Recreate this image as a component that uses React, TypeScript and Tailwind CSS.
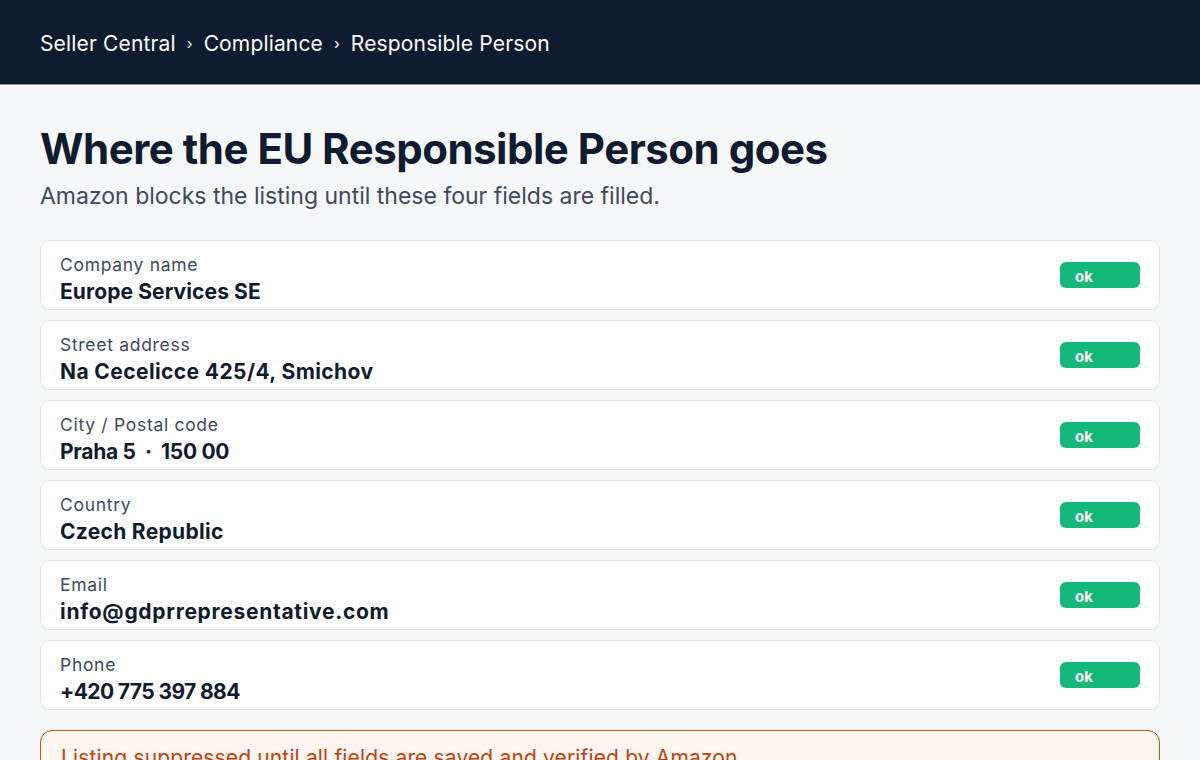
const fields = [
  { label: 'Company name', value: 'Europe Services SE', track: 'tracking-[0.1px]' },
  { label: 'Street address', value: 'Na Cecelicce 425/4, Smichov', track: 'tracking-[0.4px]' },
  { label: 'City / Postal code', value: 'Praha 5  ·  150 00', track: 'tracking-[-0.3px]' },
  { label: 'Country', value: 'Czech Republic', track: 'tracking-[0.3px]' },
  { label: 'Email', value: 'info@gdprrepresentative.com', track: 'tracking-[0.7px]' },
  { label: 'Phone', value: '+420 775 397 884', track: 'tracking-[-0.6px]' },
];

export default function App() {
  return (
    <div className="h-[760px] overflow-hidden bg-[#f6f7f9] font-['Inter',sans-serif] text-[#0f172a]">
      <header className="h-[85px] bg-[#0f1b30] border-b border-[#8a94a6] flex items-center px-10 pt-[4px]">
        <div className="flex items-center gap-[11px] text-[21px] tracking-[0.15px] text-white">
          <span>Seller Central</span>
          <span className="text-[15px]">›</span>
          <span>Compliance</span>
          <span className="text-[15px]">›</span>
          <span>Responsible Person</span>
        </div>
      </header>

      <main className="px-10 pt-[39px]">
        <h1 className="text-[42px] leading-[50px] font-bold tracking-[-0.5px] text-[#0f1b30]">
          Where the EU Responsible Person goes
        </h1>
        <p className="mt-[6px] text-[23px] leading-[32px] text-[#3c4a5e]">
          Amazon blocks the listing until these four fields are filled.
        </p>

        <div className="mt-[28px] flex flex-col gap-[10px]">
          {fields.map((f) => (
            <div
              key={f.label}
              className="h-[70px] bg-white border border-[#e2e5ea] rounded-[10px] pl-[19px] pr-[19px] flex items-center justify-between"
            >
              <div className="flex flex-col self-start pt-[12px]">
                <span className="text-[17.5px] leading-[24px] tracking-[0.7px] text-[#3c4a5e]">{f.label}</span>
                <span className={`text-[21px] leading-[30px] font-bold text-[#0f1b30] whitespace-pre ${f.track}`}>
                  {f.value}
                </span>
              </div>
              <span className="w-[80px] h-[26px] rounded-[6px] bg-[#14b87a] text-white text-[15px] font-bold pl-[15px] pt-[4px] flex items-center">
                ok
              </span>
            </div>
          ))}
        </div>

        <div className="mt-[20px] h-[80px] rounded-[12px] border border-[#c2541f] bg-[#fff5f1] px-5 pt-[13px]">
          <p className="text-[21px] leading-[28px] tracking-[0.15px] text-[#c2410c]">
            Listing suppressed until all fields are saved and verified by Amazon.
          </p>
        </div>
      </main>
    </div>
  );
}
